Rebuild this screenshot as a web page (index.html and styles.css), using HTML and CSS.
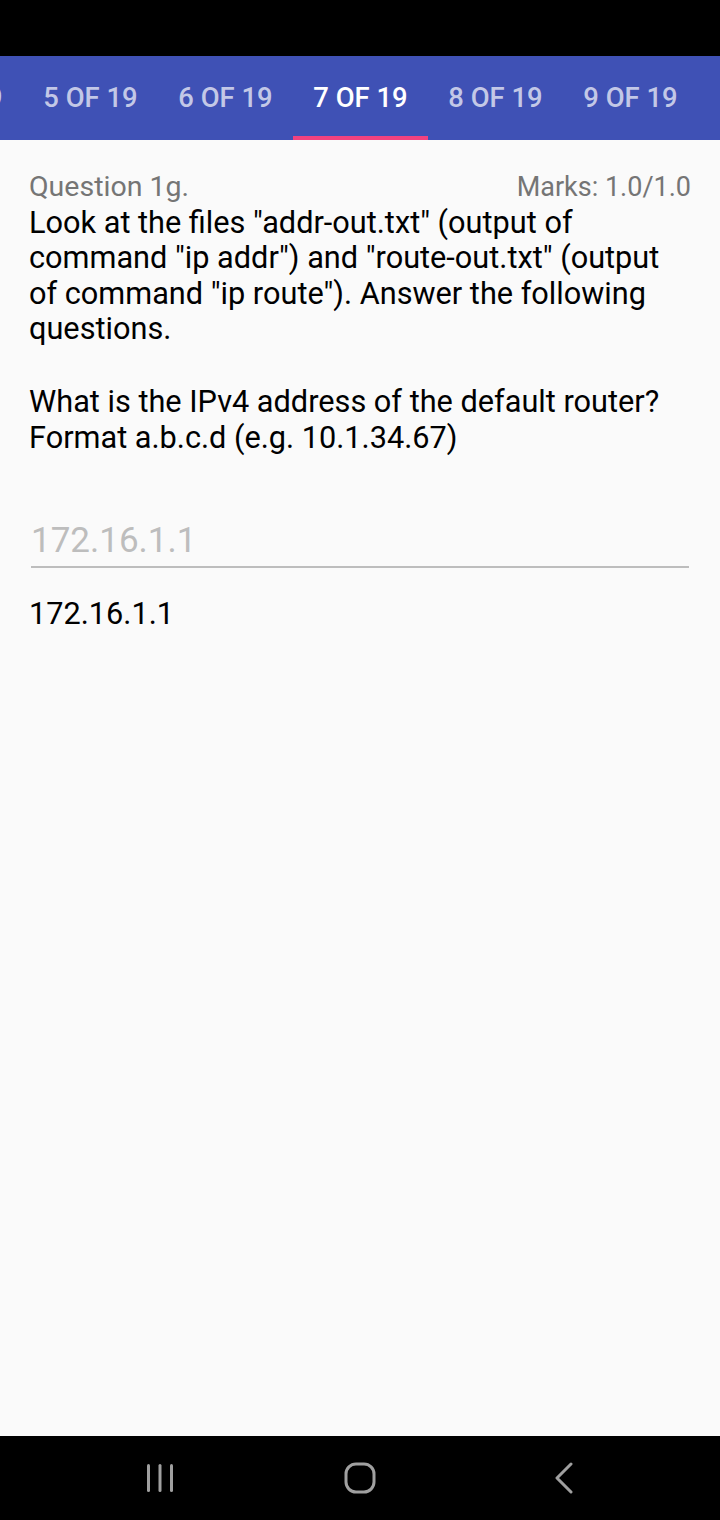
FILE: index.html
```html
<!DOCTYPE html>
<html>
<head>
<meta charset="utf-8">
<link rel="stylesheet" href="styles.css">
</head>
<body>
<div class="screen">
  <div class="statusbar"></div>
  <div class="tabbar">
    <div class="tabs">
      <div class="tab">4 OF 19</div>
      <div class="tab">5 OF 19</div>
      <div class="tab">6 OF 19</div>
      <div class="tab active">7 OF 19</div>
      <div class="tab">8 OF 19</div>
      <div class="tab">9 OF 19</div>
    </div>
  </div>
  <main class="content">
    <div class="qhead">
      <span class="qnum">Question 1g.</span>
      <span class="marks">Marks: 1.0/1.0</span>
    </div>
    <p class="qtext">Look at the files "addr-out.txt" (output of command "ip addr") and "route-out.txt" (output of command "ip route"). Answer the following questions.</p>
    <p class="qtext2">What is the IPv4 address of the default router?<br>Format a.b.c.d (e.g. 10.1.34.67)</p>
    <div class="field">
      <span class="placeholder">172.16.1.1</span>
    </div>
    <p class="answer">172.16.1.1</p>
  </main>
  <nav class="navbar">
    <svg class="nav-icon recents" width="30" height="30" viewBox="0 0 30 30">
      <rect x="2" y="1" width="3" height="28" rx="1.5" fill="#a0a0a0"/>
      <rect x="13.5" y="1" width="3" height="28" rx="1.5" fill="#a0a0a0"/>
      <rect x="25" y="1" width="3" height="28" rx="1.5" fill="#a0a0a0"/>
    </svg>
    <svg class="nav-icon home" width="32" height="32" viewBox="0 0 32 32">
      <rect x="2" y="2" width="28" height="28" rx="10" fill="none" stroke="#a0a0a0" stroke-width="3"/>
    </svg>
    <svg class="nav-icon back" width="30" height="32" viewBox="0 0 30 32">
      <path d="M24 2 L10 16 L24 30" fill="none" stroke="#a0a0a0" stroke-width="3" stroke-linecap="round" stroke-linejoin="round"/>
    </svg>
  </nav>
</div>
</body>
</html>
```
FILE: styles.css
```css
* { box-sizing: border-box; }
html, body { margin: 0; padding: 0; }
body {
  width: 720px;
  height: 1520px;
  font-family: Roboto, "Noto Sans", sans-serif;
  background: #fafafa;
  overflow: hidden;
}
.screen {
  display: flex;
  flex-direction: column;
  height: 1520px;
}
.statusbar {
  height: 56px;
  background: #000;
  flex: none;
}
.tabbar {
  height: 84px;
  background: #3f51b5;
  flex: none;
  overflow: hidden;
}
.tabs {
  display: flex;
  height: 100%;
  margin-left: -112px;
}
.tab {
  flex: none;
  width: 135px;
  height: 100%;
  display: flex;
  align-items: center;
  justify-content: center;
  font-size: 27.4px;
  font-weight: 500;
  color: rgba(255,255,255,0.7);
  border-bottom: 4px solid transparent;
  padding-top: 4px;
}
.tab.active {
  color: #fff;
  border-bottom-color: #f2427f;
}
.content {
  flex: 1;
  padding: 29px 29px 0 29px;
}
.qhead {
  display: flex;
  justify-content: space-between;
  align-items: baseline;
  color: #757575;
  line-height: 35px;
}
.qnum { font-size: 28.5px; }
.marks { font-size: 27px; }
.qtext {
  margin: 0;
  font-size: 30.7px;
  line-height: 35.3px;
  color: #000;
}
.qtext2 {
  margin: 38px 0 0 0;
  font-size: 30.7px;
  line-height: 36px;
  color: #000;
}
.field {
  margin: 62px 2px 0 2px;
  border-bottom: 2px solid #bdbdbd;
  padding-top: 1px;
  padding-bottom: 3px;
}
.placeholder {
  display: block;
  font-size: 35px;
  line-height: 44px;
  color: #bdbdbd;
}
.answer {
  margin: 28px 0 0 0;
  font-size: 30.7px;
  line-height: 36px;
  color: #000;
}
.navbar {
  height: 84px;
  flex: none;
  background: #000;
  display: flex;
  align-items: center;
  justify-content: flex-start;
}
.nav-icon { flex: none; }
.recents { margin-left: 145px; }
.home { margin-left: 169px; }
.back { margin-left: 171px; }
```
